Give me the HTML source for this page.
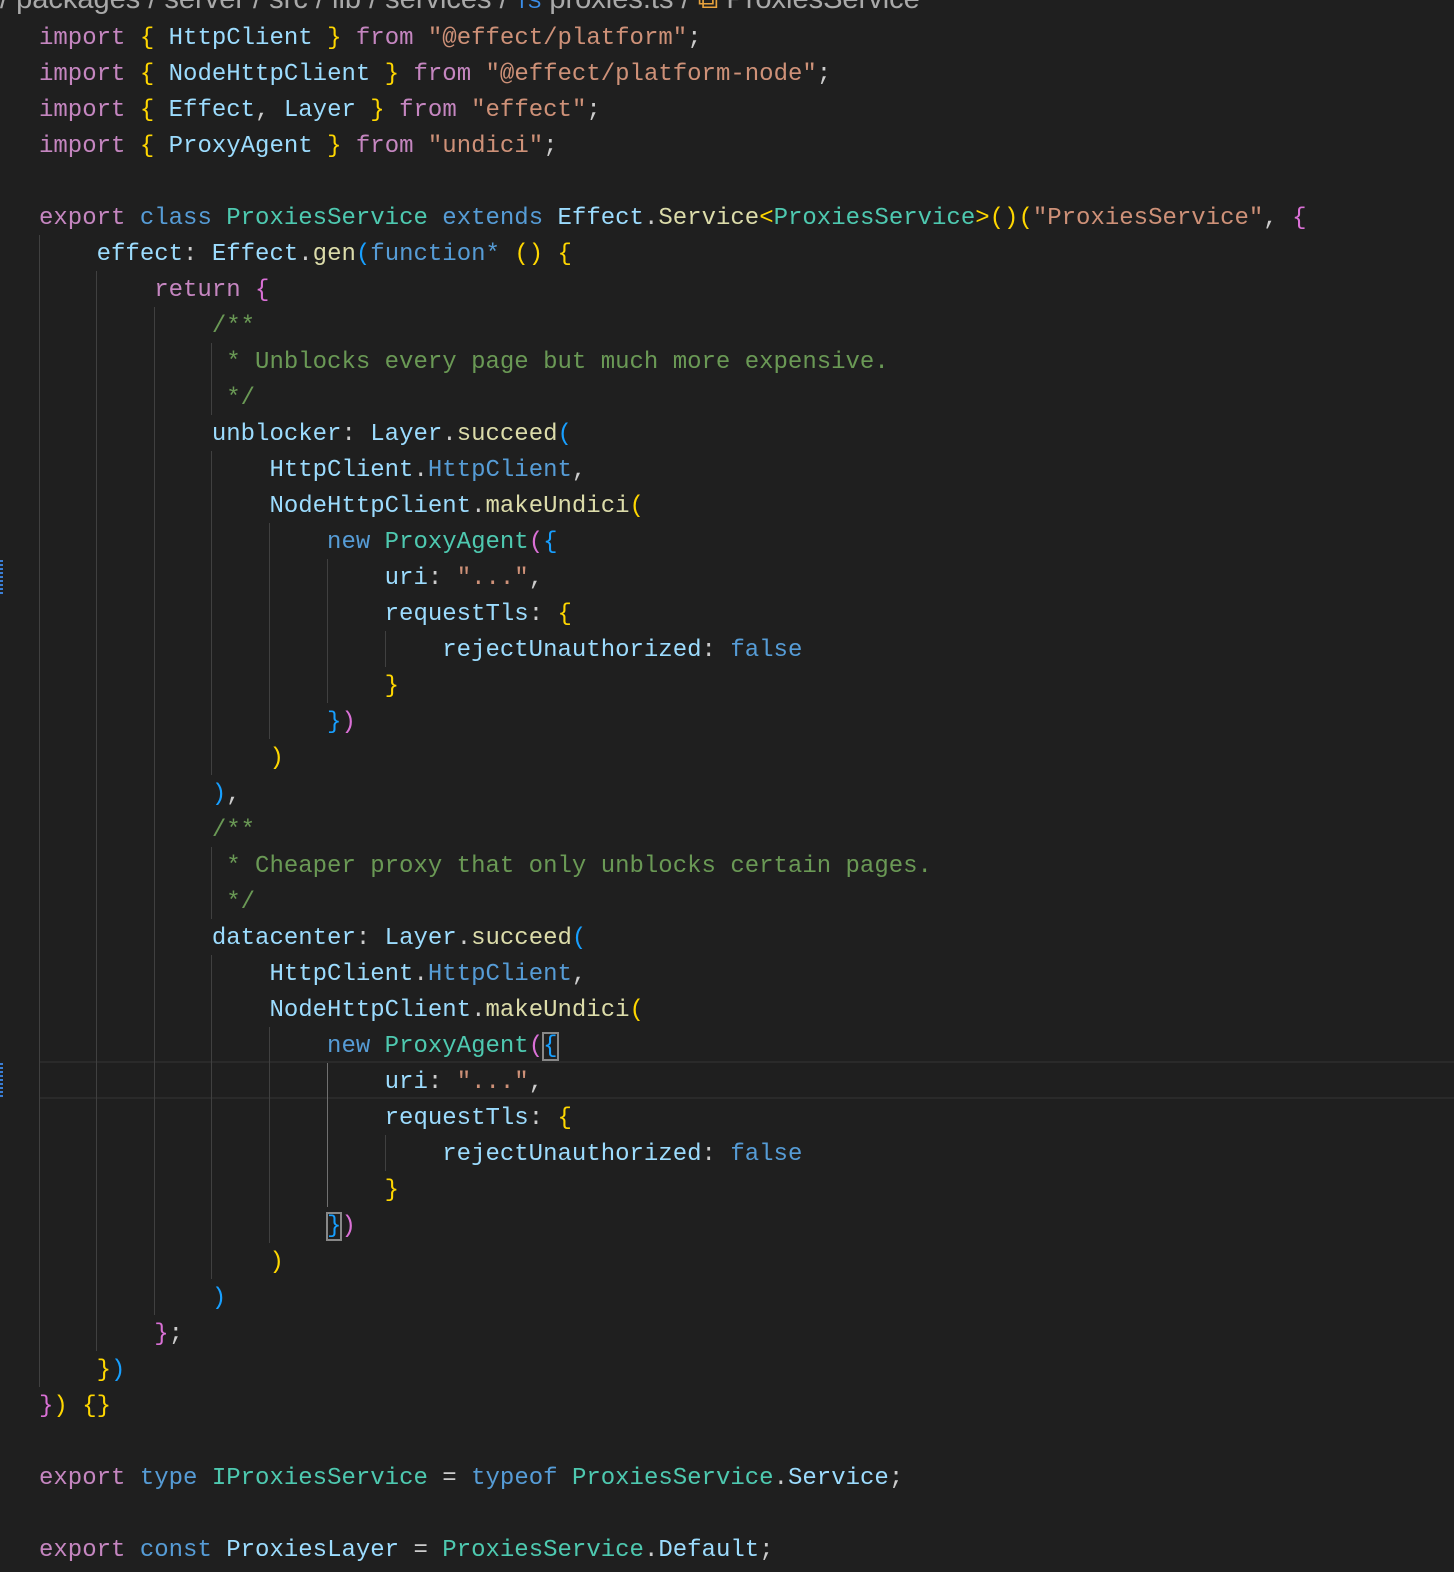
<!DOCTYPE html>
<html><head><meta charset="utf-8"><style>
html,body{margin:0;padding:0;background:#1f1f1f;width:1454px;height:1572px;overflow:hidden;position:relative}
.l{position:absolute;left:39px;height:36px;line-height:36px;white-space:pre;font-family:"Liberation Mono",monospace;font-size:24px;color:#cccccc;margin-top:2px}
.g{position:absolute;width:1px;background:#404040}
.ga{background:#707070}
.k{color:#C586C0}.s{color:#569CD6}.q{color:#CE9178}.v{color:#9CDCFE}.t{color:#4EC9B0}.f{color:#DCDCAA}.c{color:#6A9955}
.y{color:#FFD700}.p{color:#DA70D6}.b{color:#179FFF}
.bx{outline:2px solid #888;outline-offset:-1px}
.bc{position:absolute;top:-19px;left:0;height:36px;line-height:36px;font-family:"Liberation Sans",sans-serif;font-size:29px;color:#a9a9a9;white-space:pre}
</style></head><body>
<div style="position:absolute;left:39px;top:1061px;width:1415px;height:34px;border-top:2px solid #2a2a2a;border-bottom:2px solid #2a2a2a"></div>
<div style="position:absolute;left:0;top:560px;width:3px;height:34px;background:repeating-linear-gradient(#3b7fd6 0 2px,transparent 2px 4px)"></div>
<div style="position:absolute;left:0;top:1063px;width:3px;height:34px;background:repeating-linear-gradient(#3b7fd6 0 2px,transparent 2px 4px)"></div>
<div class="bc">/ packages / server / src / lib / services / <span style="color:#3b8eea;font-size:20px">TS</span> proxies.ts / <span style="color:#e8a33d">⧉</span> ProxiesService</div>

<div class="g" style="left:39px;top:235px;height:1152px"></div>
<div class="g" style="left:96px;top:271px;height:1080px"></div>
<div class="g" style="left:154px;top:307px;height:1008px"></div>
<div class="g" style="left:211px;top:343px;height:72px"></div>
<div class="g" style="left:211px;top:451px;height:324px"></div>
<div class="g" style="left:211px;top:847px;height:72px"></div>
<div class="g" style="left:211px;top:955px;height:324px"></div>
<div class="g" style="left:269px;top:523px;height:216px"></div>
<div class="g" style="left:269px;top:1027px;height:216px"></div>
<div class="g" style="left:327px;top:559px;height:144px"></div>
<div class="g ga" style="left:327px;top:1063px;height:144px"></div>
<div class="g" style="left:385px;top:631px;height:36px"></div>
<div class="g" style="left:385px;top:1135px;height:36px"></div>

<div class="l" style="top:19px"><span class="k">import</span> <span class="y">{</span> <span class="v">HttpClient</span> <span class="y">}</span> <span class="k">from</span> <span class="q">"@effect/platform"</span>;</div>
<div class="l" style="top:55px"><span class="k">import</span> <span class="y">{</span> <span class="v">NodeHttpClient</span> <span class="y">}</span> <span class="k">from</span> <span class="q">"@effect/platform-node"</span>;</div>
<div class="l" style="top:91px"><span class="k">import</span> <span class="y">{</span> <span class="v">Effect</span>, <span class="v">Layer</span> <span class="y">}</span> <span class="k">from</span> <span class="q">"effect"</span>;</div>
<div class="l" style="top:127px"><span class="k">import</span> <span class="y">{</span> <span class="v">ProxyAgent</span> <span class="y">}</span> <span class="k">from</span> <span class="q">"undici"</span>;</div>
<div class="l" style="top:199px"><span class="k">export</span> <span class="s">class</span> <span class="t">ProxiesService</span> <span class="s">extends</span> <span class="v">Effect</span>.<span class="f">Service</span><span class="y">&lt;</span><span class="t">ProxiesService</span><span class="y">&gt;()(</span><span class="q">"ProxiesService"</span>, <span class="p">{</span></div>
<div class="l" style="top:235px">    <span class="v">effect</span>: <span class="v">Effect</span>.<span class="f">gen</span><span class="b">(</span><span class="s">function*</span> <span class="y">()</span> <span class="y">{</span></div>
<div class="l" style="top:271px">        <span class="k">return</span> <span class="p">{</span></div>
<div class="l c" style="top:307px">            /**</div>
<div class="l c" style="top:343px">             * Unblocks every page but much more expensive.</div>
<div class="l c" style="top:379px">             */</div>
<div class="l" style="top:415px">            <span class="v">unblocker</span>: <span class="v">Layer</span>.<span class="f">succeed</span><span class="b">(</span></div>
<div class="l" style="top:451px">                <span class="v">HttpClient</span>.<span class="s">HttpClient</span>,</div>
<div class="l" style="top:487px">                <span class="v">NodeHttpClient</span>.<span class="f">makeUndici</span><span class="y">(</span></div>
<div class="l" style="top:523px">                    <span class="s">new</span> <span class="t">ProxyAgent</span><span class="p">(</span><span class="b">{</span></div>
<div class="l" style="top:559px">                        <span class="v">uri</span>: <span class="q">"..."</span>,</div>
<div class="l" style="top:595px">                        <span class="v">requestTls</span>: <span class="y">{</span></div>
<div class="l" style="top:631px">                            <span class="v">rejectUnauthorized</span>: <span class="s">false</span></div>
<div class="l" style="top:667px">                        <span class="y">}</span></div>
<div class="l" style="top:703px">                    <span class="b">}</span><span class="p">)</span></div>
<div class="l" style="top:739px">                <span class="y">)</span></div>
<div class="l" style="top:775px">            <span class="b">)</span>,</div>
<div class="l c" style="top:811px">            /**</div>
<div class="l c" style="top:847px">             * Cheaper proxy that only unblocks certain pages.</div>
<div class="l c" style="top:883px">             */</div>
<div class="l" style="top:919px">            <span class="v">datacenter</span>: <span class="v">Layer</span>.<span class="f">succeed</span><span class="b">(</span></div>
<div class="l" style="top:955px">                <span class="v">HttpClient</span>.<span class="s">HttpClient</span>,</div>
<div class="l" style="top:991px">                <span class="v">NodeHttpClient</span>.<span class="f">makeUndici</span><span class="y">(</span></div>
<div class="l" style="top:1027px">                    <span class="s">new</span> <span class="t">ProxyAgent</span><span class="p">(</span><span class="b bx">{</span></div>
<div class="l" style="top:1063px">                        <span class="v">uri</span>: <span class="q">"..."</span>,</div>
<div class="l" style="top:1099px">                        <span class="v">requestTls</span>: <span class="y">{</span></div>
<div class="l" style="top:1135px">                            <span class="v">rejectUnauthorized</span>: <span class="s">false</span></div>
<div class="l" style="top:1171px">                        <span class="y">}</span></div>
<div class="l" style="top:1207px">                    <span class="b bx">}</span><span class="p">)</span></div>
<div class="l" style="top:1243px">                <span class="y">)</span></div>
<div class="l" style="top:1279px">            <span class="b">)</span></div>
<div class="l" style="top:1315px">        <span class="p">}</span>;</div>
<div class="l" style="top:1351px">    <span class="y">}</span><span class="b">)</span></div>
<div class="l" style="top:1387px"><span class="p">}</span><span class="y">)</span> <span class="y">{}</span></div>
<div class="l" style="top:1459px"><span class="k">export</span> <span class="s">type</span> <span class="t">IProxiesService</span> = <span class="s">typeof</span> <span class="t">ProxiesService</span>.<span class="v">Service</span>;</div>
<div class="l" style="top:1531px"><span class="k">export</span> <span class="s">const</span> <span class="v">ProxiesLayer</span> = <span class="t">ProxiesService</span>.<span class="v">Default</span>;</div>
</body></html>
